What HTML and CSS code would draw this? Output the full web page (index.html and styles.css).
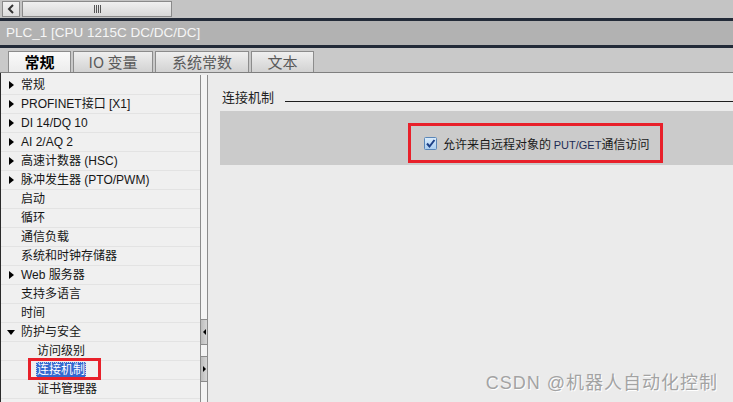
FILE: index.html
```html
<!DOCTYPE html>
<html lang="zh-CN">
<head>
  <meta charset="UTF-8" />
  <title>PLC_1 属性</title>
  <link rel="stylesheet" href="styles.css">
</head>
<body>
  <!-- Horizontal scroll strip -->
  <div class="hscroll">
    <div class="hs-btn">
      <svg width="8" height="10" viewBox="0 0 8 10"><path d="M6 1 L2 5 L6 9" fill="none" stroke="#333" stroke-width="2"/></svg>
    </div>
    <div class="hs-thumb"><span class="grip"></span></div>
  </div>
  <div class="rule"></div>
  <div class="titlebar">PLC_1 [CPU 1215C DC/DC/DC]</div>
  <div class="rule"></div>

  <!-- Tabs -->
  <div class="tabs">
    <div class="tab active">常规</div>
    <div class="tab tab-io">IO 变量</div>
    <div class="tab tab-sys">系统常数</div>
    <div class="tab tab-txt">文本</div>
  </div>

  <div class="main">
    <!-- Navigation tree -->
    <ul class="tree">
      <li class="node"><span class="caret"></span>常规</li>
      <li class="node"><span class="caret"></span>PROFINET接口 [X1]</li>
      <li class="node"><span class="caret"></span>DI 14/DQ 10</li>
      <li class="node"><span class="caret"></span>AI 2/AQ 2</li>
      <li class="node"><span class="caret"></span>高速计数器 (HSC)</li>
      <li class="node"><span class="caret"></span>脉冲发生器 (PTO/PWM)</li>
      <li class="leaf">启动</li>
      <li class="leaf">循环</li>
      <li class="leaf">通信负载</li>
      <li class="leaf">系统和时钟存储器</li>
      <li class="node"><span class="caret"></span>Web 服务器</li>
      <li class="leaf">支持多语言</li>
      <li class="leaf">时间</li>
      <li class="node open"><span class="caret"></span>防护与安全</li>
      <li class="sub">访问级别</li>
      <li class="sub"><span class="selected">连接机制</span></li>
      <li class="sub">证书管理器</li>
    </ul>

    <div class="splitter">
      <div class="split-btn"><span class="tri-left"></span></div>
      <div class="split-btn"><span class="tri-right"></span></div>
    </div>

    <!-- Property page -->
    <div class="content">
      <div class="section-head">
        <span class="section-title">连接机制</span>
        <span class="section-line"></span>
      </div>
      <div class="section-body">
        <label class="option">
          <svg class="check" width="13" height="13" viewBox="0 0 13 13">
            <defs>
              <linearGradient id="cb" x1="0" y1="0" x2="0" y2="1">
                <stop offset="0" stop-color="#dcecfb"/>
                <stop offset="1" stop-color="#a9cdf0"/>
              </linearGradient>
            </defs>
            <rect x="0.5" y="0.5" width="12" height="12" rx="1" fill="url(#cb)" stroke="#5a86b8"/>
            <path d="M3 6.5 L5.5 9.5 L10.5 3" fill="none" stroke="#1c3f86" stroke-width="2"/>
          </svg>
          <span>允许来自远程对象的 <span class="latin">PUT/GET</span>通信访问</span>
        </label>
      </div>
      <div class="watermark">CSDN @机器人自动化控制</div>
    </div>
  </div>
</body>
</html>
```

FILE: styles.css
```css
/* Base */
body {
  margin: 0;
  width: 733px;
  height: 402px;
  overflow: hidden;
  background-color: #ebebeb;
  font-family: "Liberation Sans", "Noto Sans CJK SC", sans-serif;
  color: #1a1a1a;
}

/* Top scroll strip */
.hscroll {
  height: 18px;
  background-color: #c4c4c4;
  display: flex;
  align-items: flex-start;
  padding: 1px 0 0 2px;
  box-sizing: border-box;
  gap: 2px;
}
.hs-btn {
  width: 18px;
  height: 16px;
  box-sizing: border-box;
  border: 1px solid #8a8a8a;
  background: linear-gradient(#f2f2f2, #dcdcdc);
  display: flex;
  align-items: center;
  justify-content: center;
}
.hs-thumb {
  width: 150px;
  height: 16px;
  box-sizing: border-box;
  border: 1px solid #8a8a8a;
  background: linear-gradient(#f0f0f0, #d8d8d8);
  display: flex;
  align-items: center;
  justify-content: center;
}
.grip {
  width: 7px;
  height: 8px;
  background: repeating-linear-gradient(90deg, #555 0 1px, transparent 1px 2px);
}

.rule {
  height: 3px;
  background-color: #222a38;
}

.titlebar {
  height: 24px;
  line-height: 24px;
  background-color: #b2b2b2;
  color: #f6f6f6;
  font-size: 13.5px;
  padding-left: 6px;
}

/* Tabs */
.tabs {
  height: 25px;
  box-sizing: border-box;
  background-color: #c9c9c9;
  border-bottom: 1px solid #7f7f7f;
  display: flex;
  align-items: flex-end;
  gap: 2px;
  padding-left: 8px;
}
.tab {
  height: 21px;
  box-sizing: border-box;
  border: 1px solid #8c8c8c;
  border-bottom: none;
  background: linear-gradient(#efefef, #d2d2d2);
  color: #5a5a5a;
  font-size: 15px;
  line-height: 20px;
  text-align: center;
  font-family: "Noto Sans CJK SC", sans-serif;
}
.tab.active {
  width: 63px;
  background: linear-gradient(#fafafa, #ececec);
  color: #000;
  font-weight: bold;
}
.tab-io { width: 80px; }
.tab-sys { width: 94px; }
.tab-txt { width: 63px; }

/* Main area */
.main {
  display: flex;
  height: 329px;
}

.tree {
  list-style: none;
  margin: 0;
  padding: 3px 0 0;
  width: 199px;
  background-color: #f0f0f0;
  border-left: 1px solid #2a2a2a;
  font-size: 12px;
}
.tree li {
  height: 19px;
  line-height: 18px;
  box-sizing: border-box;
  border-bottom: 1px solid #e3e3e3;
  padding-left: 20px;
  white-space: nowrap;
  position: relative;
  color: #161616;
}
.caret {
  position: absolute;
  left: 8px;
  top: 5px;
  width: 0;
  height: 0;
  border-top: 4px solid transparent;
  border-bottom: 4px solid transparent;
  border-left: 5px solid #000;
}
.node.open .caret {
  left: 6px;
  top: 7px;
  border-left: 4px solid transparent;
  border-right: 4px solid transparent;
  border-top: 5px solid #000;
  border-bottom: none;
}
.tree .sub {
  padding-left: 36px;
}
.selected {
  display: inline-block;
  background-color: #3468cf;
  color: #fff;
  outline: 1px dotted #c8d6f0;
  outline-offset: -1px;
  padding: 0 1px;
  line-height: 17px;
  margin-left: -1px;
  position: relative;
}
.selected::after {
  content: "";
  position: absolute;
  left: -8px;
  top: -4px;
  width: 67px;
  height: 16px;
  border: 3px solid #e8202a;
}

/* Splitter with collapse buttons */
.splitter {
  width: 8px;
  box-sizing: border-box;
  margin-top: 2px;
  border-left: 1px solid #8c8c8c;
  border-right: 1px solid #8c8c8c;
  background-color: #f4f4f4;
  display: flex;
  flex-direction: column;
  justify-content: flex-end;
  gap: 11px;
  padding-bottom: 20px;
}
.split-btn {
  height: 24px;
  background: linear-gradient(90deg, #bdbdbd, #d6d6d6);
  border-top: 1px solid #8c8c8c;
  border-bottom: 1px solid #8c8c8c;
  display: flex;
  align-items: center;
  justify-content: center;
}
.tri-left, .tri-right {
  width: 0;
  height: 0;
  border-top: 3px solid transparent;
  border-bottom: 3px solid transparent;
}
.tri-left { border-right: 3px solid #000; }
.tri-right { border-left: 3px solid #000; }

/* Property page */
.content {
  flex: 1;
  position: relative;
  background-color: #ebebeb;
}
.section-head {
  display: flex;
  align-items: flex-end;
  padding: 16px 0 0 14px;
  height: 16px;
  margin-bottom: 6px;
}
.section-title {
  font-family: "Noto Sans CJK SC", sans-serif;
  font-size: 13px;
  line-height: 16px;
  color: #222;
}
.section-line {
  flex: 1;
  height: 1px;
  background-color: #1e1e1e;
  margin: 0 0 3px 11px;
}
.section-body {
  margin-left: 12px;
  height: 54px;
  box-sizing: border-box;
  background-color: #cbcbcb;
  padding: 12px 0 0 188px;
}
.option {
  width: 255px;
  height: 40px;
  box-sizing: border-box;
  border: 3px solid #e8202a;
  display: flex;
  align-items: center;
  gap: 6px;
  padding-left: 13px;
  font-size: 12px;
  color: #1a1a1a;
  font-family: "Noto Sans CJK SC", sans-serif;
}
.check {
  flex: none;
}
.latin {
  font-family: "Liberation Sans", sans-serif;
  color: #1d2b55;
  font-size: 11px;
}

.watermark {
  position: absolute;
  right: 15px;
  bottom: 8px;
  font-size: 18px;
  letter-spacing: 1px;
  color: #a3a3a3;
  text-shadow: 1px 1px 0 #ffffff;
  font-family: "Liberation Sans", "Noto Sans CJK SC", sans-serif;
}
```
